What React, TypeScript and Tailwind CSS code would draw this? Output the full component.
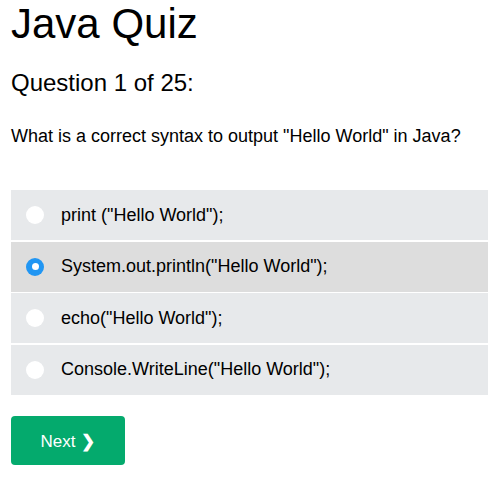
import React, { useState } from 'react'

const options = [
  'print ("Hello World");',
  'System.out.println("Hello World");',
  'echo("Hello World");',
  'Console.WriteLine("Hello World");',
]

function Radio({ checked }: { checked: boolean }) {
  if (checked) {
    return (
      <span className="flex size-[18px] items-center justify-center rounded-full bg-[#2196f3]">
        <span className="size-[7px] rounded-full bg-white" />
      </span>
    )
  }
  return <span className="size-[18px] rounded-full bg-white" />
}

export default function App() {
  const [selected, setSelected] = useState(1)

  return (
    <div className="min-h-screen bg-white pl-[11px] font-['Liberation_Sans',Arial,sans-serif] text-black">
      <h1 className="text-[42px] leading-[48px]">Java Quiz</h1>
      <h2 className="mt-[21px] text-[24px] leading-[28px]">Question 1 of 25:</h2>
      <p className="mt-[29px] text-[18px] leading-[21px]">
        What is a correct syntax to output "Hello World" in Java?
      </p>
      <div className="mt-[43px] flex flex-col gap-[1.5px]">
        {options.map((opt, i) => (
          <label
            key={opt}
            onClick={() => setSelected(i)}
            className={
              'flex h-[50px] cursor-pointer items-center gap-[17px] pl-[15px] text-[18px] ' +
              (selected === i ? 'bg-[#dddddd]' : 'bg-[#e7e9eb]')
            }
          >
            <Radio checked={selected === i} />
            <span>{opt}</span>
          </label>
        ))}
      </div>
      <button className="mt-[21px] flex h-[49px] w-[114px] items-center justify-center gap-[6px] rounded-[4px] bg-[#04aa6d] pt-[3px] text-[17px] text-white">
        Next <span className="text-[17px] font-bold">❯</span>
      </button>
    </div>
  )
}
